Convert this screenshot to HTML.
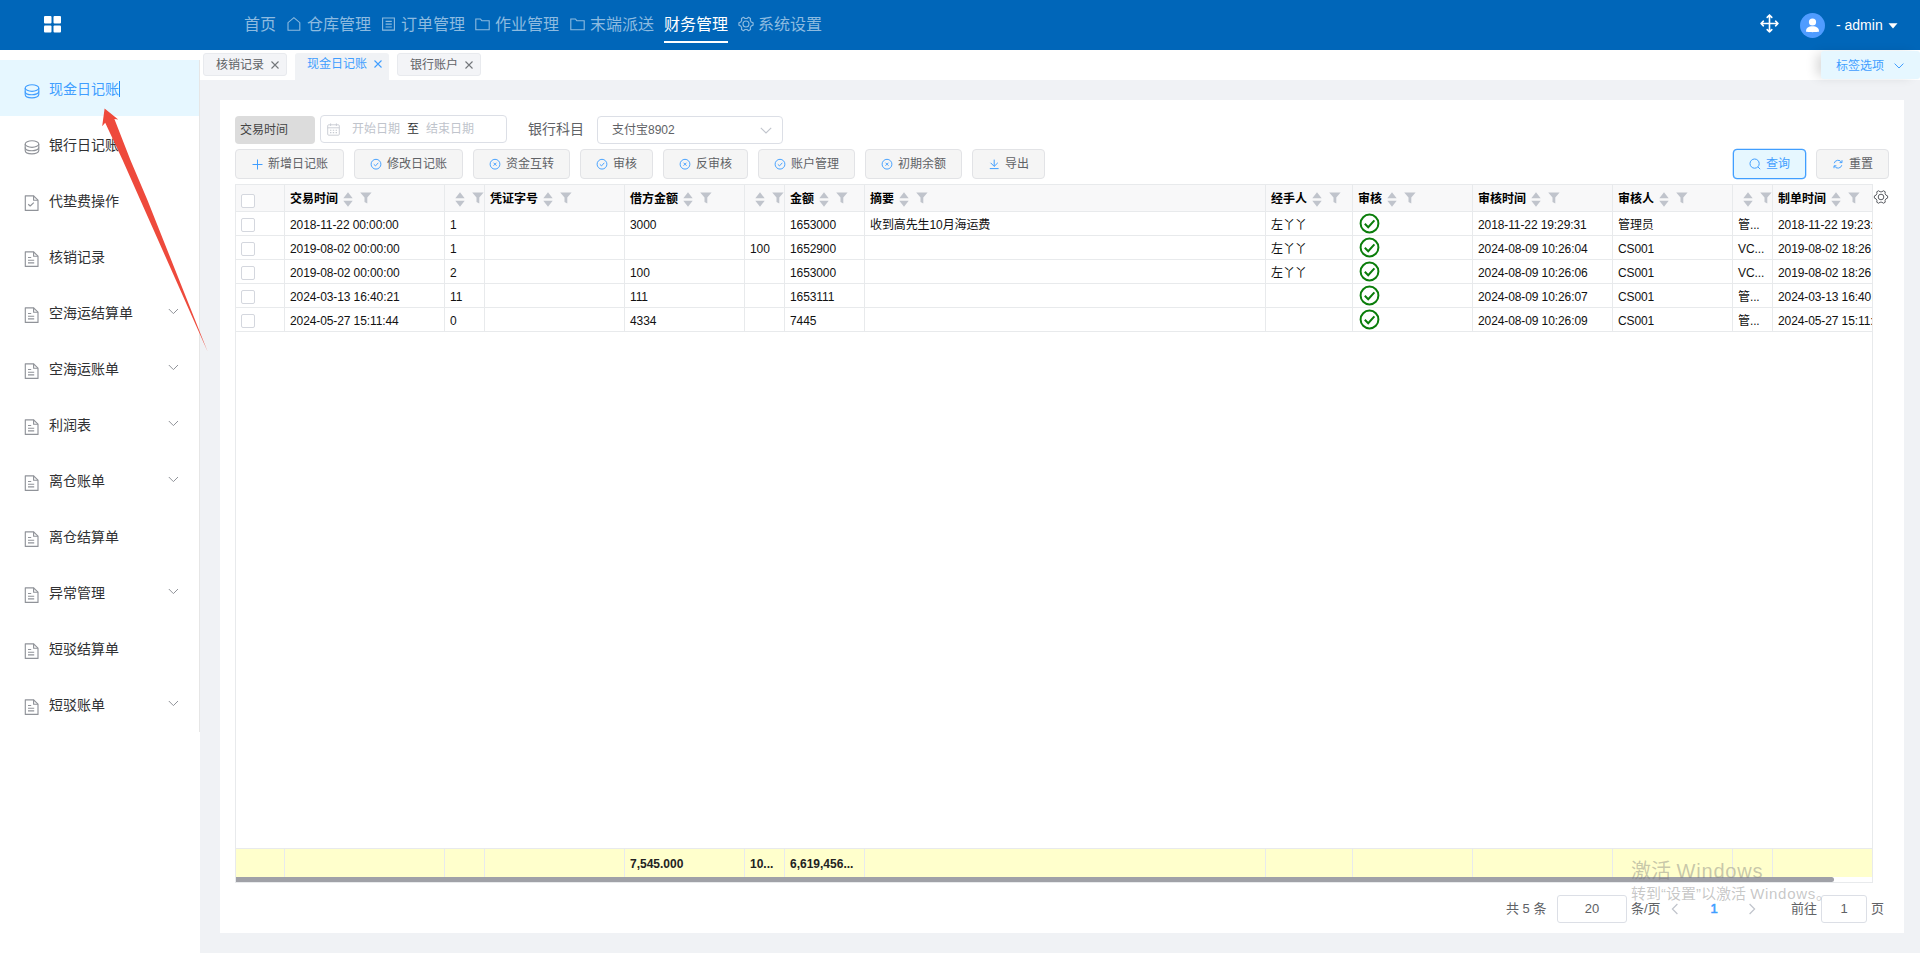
<!DOCTYPE html><html lang="zh-CN"><head><meta charset="utf-8"><title>现金日记账</title><style>
*{box-sizing:border-box;margin:0;padding:0}
html,body{width:1920px;height:953px;overflow:hidden}
body{position:relative;background:#f0f2f5;font-family:"Liberation Sans","Noto Sans CJK SC",sans-serif;font-size:12px;color:#303133}
.abs{position:absolute}
svg{display:block;overflow:visible}
#top{position:absolute;left:0;top:0;width:1920px;height:50px;background:#0066b9}
.nav{position:absolute;top:1px;height:48px;line-height:48px;font-size:16px;color:#8dbbe0;white-space:nowrap}
.nav.on{color:#fff}
.nico{position:absolute}
#side{position:absolute;left:0;top:50px;width:200px;height:903px;background:#fff}
#sideb{position:absolute;left:199px;top:60px;width:1px;height:672px;background:#e6e6e6}
.mi{position:absolute;left:0;width:199px;height:56px;line-height:56px;font-size:14px;color:#303133}
.mi.on{background:#e6f7ff;color:#409eff}
.mi span{position:absolute;left:49px;top:1px;white-space:nowrap}
.mi svg.ic{position:absolute;left:24.4px;top:24px}
.mi svg.ch{position:absolute;left:168px;top:24px}
#tabbar{position:absolute;left:200px;top:50px;width:1720px;height:30px;background:#fff}
.tab{position:absolute;top:53px;height:23px;border:1px solid #e8eaee;border-radius:3px;background:#f3f4f7;font-size:12px;color:#606266;line-height:21px;white-space:nowrap}
.tab.on{height:27px;border:none;border-radius:3px 3px 0 0;background:#f0f2f5;color:#409eff;line-height:21px}
.tab span{position:absolute;top:1px}
.tab svg{position:absolute}
#tagopt{position:absolute;left:1821px;top:51px;width:99px;height:28px;background:#e6f7ff;border-radius:3px;font-size:12px;color:#409eff;line-height:27px;box-shadow:-7px 0 12px -3px rgba(0,0,0,.16)}
#card{position:absolute;left:220px;top:100px;width:1684px;height:833px;background:#fff}
.lbl{position:absolute;left:235px;top:116px;width:80px;height:28px;background:#dcdcdc;border-radius:4px;font-size:12px;color:#444;line-height:29px;padding-left:5px}
.inp{position:absolute;border:1px solid #dcdfe6;border-radius:4px;background:#fff}
.ph{position:absolute;font-size:12px;color:#c0c4cc;line-height:26px;top:0;white-space:nowrap}
.btn{position:absolute;top:149px;height:30px;border:1px solid #e2e3e6;border-radius:4px;background:#f5f5f5;font-size:12px;color:#606266;line-height:28px;white-space:nowrap}
.btn svg{position:absolute;left:15px;top:8px}
.btn span{position:absolute;left:32px;top:0}
.btn.pri{border-color:#409eff;background:#e6f7ff;color:#409eff;box-shadow:0 0 0 .3px #409eff}
#tbl{position:absolute;left:235px;top:184px;width:1638px;height:699px;border:1px solid #e8eaec;background:#fff;overflow:hidden}
.c{position:absolute;border-right:1px solid #e8eaec;border-bottom:1px solid #e8eaec;font-size:12px;color:#111;white-space:nowrap;overflow:hidden;padding-left:5px}
.h{top:0;height:27px;background:#f8f8f9;font-weight:bold;color:#000;line-height:29px}
.r{height:24px;line-height:27px;letter-spacing:-.1px}
.f{top:664px;height:29px;background:#ffffcc;font-weight:bold;line-height:30px;border-bottom:none;color:#222}
.cb{position:absolute;left:5px;width:14px;height:14px;border:1px solid #d4d7de;border-radius:2px;background:#fff}
.srt{display:inline-block;vertical-align:top;margin-left:5px;margin-top:7px}
.flt{display:inline-block;vertical-align:top;margin-left:7px;margin-top:7px}
.pg{position:absolute;font-size:13px;color:#606266;line-height:28px;top:895px;white-space:nowrap}
.wm{position:absolute;color:rgba(120,120,120,.42);white-space:nowrap}
</style></head><body>
<div id="top">
<svg class="abs" style="left:44px;top:15.5px" width="17" height="17" viewBox="0 0 17 17"><g fill="#fff"><rect x="0" y="0" width="7.5" height="7.5" rx="1"/><rect x="9.5" y="0" width="7.5" height="7.5" rx="1"/><rect x="0" y="9.5" width="7.5" height="7" rx="1"/><rect x="9.5" y="9.5" width="7.5" height="7" rx="1"/></g></svg>
<div class="nav" style="left:244px">首页</div>
<svg class="abs" style="left:287px;top:17px" width="14" height="14" viewBox="0 0 14 14"><path d="M1 13.3 V5.7 L6.9 0.7 L12.8 5.7 V13.3 Z" fill="none" stroke="#8dbbe0" stroke-width="1.1" stroke-linejoin="miter"/></svg>
<div class="nav" style="left:307px">仓库管理</div>
<svg class="abs" style="left:382px;top:17px" width="14" height="14" viewBox="0 0 14 14"><path d="M0.6 1 H12.4 V13.1 H0.6 Z M3.6 4.4 H9.8 M3.6 7.1 H9.8 M3.6 10 H9.8" fill="none" stroke="#8dbbe0" stroke-width="1.1"/></svg>
<div class="nav" style="left:401px">订单管理</div>
<svg class="abs" style="left:475px;top:17.5px" width="16" height="14" viewBox="0 0 16 14"><path d="M0.8 1 H5.4 L6.8 2.7 H14.2 V11.8 H0.8 Z" fill="none" stroke="#8dbbe0" stroke-width="1.1" stroke-linejoin="miter"/></svg>
<div class="nav" style="left:495px">作业管理</div>
<svg class="abs" style="left:570px;top:17.5px" width="16" height="14" viewBox="0 0 16 14"><path d="M0.8 1 H5.4 L6.8 2.7 H14.2 V11.8 H0.8 Z" fill="none" stroke="#8dbbe0" stroke-width="1.1" stroke-linejoin="miter"/></svg>
<div class="nav" style="left:590px">末端派送</div>
<div class="nav on" style="left:664px">财务管理</div>
<div class="abs" style="left:664px;top:41px;width:64px;height:2px;background:#fff"></div>
<svg class="abs" style="left:737.7px;top:16px" width="16" height="16" viewBox="0 0 16 16"><path d="M15.11 6.87 L15.11 9.13 L13.26 9.92 L12.29 11.60 L12.53 13.60 L10.58 14.72 L8.97 13.51 L7.03 13.51 L5.42 14.72 L3.47 13.60 L3.71 11.60 L2.74 9.92 L0.89 9.13 L0.89 6.87 L2.74 6.08 L3.71 4.40 L3.47 2.40 L5.42 1.28 L7.03 2.49 L8.97 2.49 L10.58 1.28 L12.53 2.40 L12.29 4.40 L13.26 6.08 Z" fill="none" stroke="#8dbbe0" stroke-width="1.1" stroke-linejoin="round"/><circle cx="8" cy="8" r="3.0" fill="none" stroke="#8dbbe0" stroke-width="1.1"/></svg>
<div class="nav" style="left:758px">系统设置</div>
<svg class="abs" style="left:1760px;top:14px" width="19" height="19" viewBox="0 0 19 19"><path d="M9.5 1 V18 M1 9.5 H18 M7.2 3.4 L9.5 1 L11.8 3.4 M7.2 15.6 L9.5 18 L11.8 15.6 M3.4 7.2 L1 9.5 L3.4 11.8 M15.6 7.2 L18 9.5 L15.6 11.8" fill="none" stroke="#fff" stroke-width="1.6" stroke-linecap="round" stroke-linejoin="round"/></svg>
<svg class="abs" style="left:1800px;top:13px" width="25" height="25" viewBox="0 0 25 25"><circle cx="12.5" cy="12.5" r="12.5" fill="#4f9cff"/><circle cx="12.5" cy="9" r="3.6" fill="#fff"/><path d="M6 18.6 C6 14.6 8.6 13.2 12.5 13.2 S19 14.6 19 18.6 C19 19.4 6 19.4 6 18.6Z" fill="#fff"/></svg>
<div class="abs" style="left:1836px;top:0;height:50px;line-height:50px;font-size:14px;color:#fff;white-space:nowrap">- admin</div>
<svg class="abs" style="left:1888px;top:23px" width="10" height="6" viewBox="0 0 10 6"><path d="M0.5 0.3 H9.5 L5 5.6 Z" fill="#fff"/></svg>
</div>
<div id="side"></div><div id="sideb"></div>
<div class="mi on" style="top:60px"><svg class="ic" width="16" height="15" viewBox="0 0 16 15"><g fill="none" stroke="#409eff" stroke-width="1.15"><ellipse cx="8" cy="4" rx="6.8" ry="3.3"/><path d="M1.2 4 V7.4 C1.2 11.8 14.8 11.8 14.8 7.4 V4"/><path d="M1.2 7.4 V10.6 C1.2 15 14.8 15 14.8 10.6 V7.4"/></g></svg><span>现金日记账</span></div>
<div class="mi" style="top:116px"><svg class="ic" width="16" height="15" viewBox="0 0 16 15"><g fill="none" stroke="#909399" stroke-width="1.15"><ellipse cx="8" cy="4" rx="6.8" ry="3.3"/><path d="M1.2 4 V7.4 C1.2 11.8 14.8 11.8 14.8 7.4 V4"/><path d="M1.2 7.4 V10.6 C1.2 15 14.8 15 14.8 10.6 V7.4"/></g></svg><span>银行日记账</span></div>
<div class="mi" style="top:172px"><svg class="ic" style="margin-top:-1px" width="15" height="16" viewBox="0 0 15 16"><g fill="none" stroke="#909399" stroke-width="1.15" stroke-linejoin="round"><path d="M1.3 0.8 H9.6 L14 5.2 V15.4 H1.3 Z"/><path d="M9.6 0.8 V5.2 H14"/><path d="M4.2 9.2 L6.2 11 L9.8 7.6"/></g></svg><span>代垫费操作</span></div>
<div class="mi" style="top:228px"><svg class="ic" style="margin-top:-1px" width="15" height="16" viewBox="0 0 15 16"><g fill="none" stroke="#909399" stroke-width="1.15" stroke-linejoin="round"><path d="M1.3 0.8 H9.6 L14 5.2 V15.4 H1.3 Z"/><path d="M9.6 0.8 V5.2 H14"/><path d="M4 6.5 H7.2 M4 9.2 H10.2 M4 11.8 H10.2"/></g></svg><span>核销记录</span></div>
<div class="mi" style="top:284px"><svg class="ic" style="margin-top:-1px" width="15" height="16" viewBox="0 0 15 16"><g fill="none" stroke="#909399" stroke-width="1.15" stroke-linejoin="round"><path d="M1.3 0.8 H9.6 L14 5.2 V15.4 H1.3 Z"/><path d="M9.6 0.8 V5.2 H14"/><path d="M4 6.5 H7.2 M4 9.2 H10.2 M4 11.8 H10.2"/></g></svg><span>空海运结算单</span><svg class="ch" width="11" height="7" viewBox="0 0 11 7"><path d="M0.8 1 L5.4 5.6 L10 1" fill="none" stroke="#909399" stroke-width="1"/></svg></div>
<div class="mi" style="top:340px"><svg class="ic" style="margin-top:-1px" width="15" height="16" viewBox="0 0 15 16"><g fill="none" stroke="#909399" stroke-width="1.15" stroke-linejoin="round"><path d="M1.3 0.8 H9.6 L14 5.2 V15.4 H1.3 Z"/><path d="M9.6 0.8 V5.2 H14"/><path d="M4 6.5 H7.2 M4 9.2 H10.2 M4 11.8 H10.2"/></g></svg><span>空海运账单</span><svg class="ch" width="11" height="7" viewBox="0 0 11 7"><path d="M0.8 1 L5.4 5.6 L10 1" fill="none" stroke="#909399" stroke-width="1"/></svg></div>
<div class="mi" style="top:396px"><svg class="ic" style="margin-top:-1px" width="15" height="16" viewBox="0 0 15 16"><g fill="none" stroke="#909399" stroke-width="1.15" stroke-linejoin="round"><path d="M1.3 0.8 H9.6 L14 5.2 V15.4 H1.3 Z"/><path d="M9.6 0.8 V5.2 H14"/><path d="M4 6.5 H7.2 M4 9.2 H10.2 M4 11.8 H10.2"/></g></svg><span>利润表</span><svg class="ch" width="11" height="7" viewBox="0 0 11 7"><path d="M0.8 1 L5.4 5.6 L10 1" fill="none" stroke="#909399" stroke-width="1"/></svg></div>
<div class="mi" style="top:452px"><svg class="ic" style="margin-top:-1px" width="15" height="16" viewBox="0 0 15 16"><g fill="none" stroke="#909399" stroke-width="1.15" stroke-linejoin="round"><path d="M1.3 0.8 H9.6 L14 5.2 V15.4 H1.3 Z"/><path d="M9.6 0.8 V5.2 H14"/><path d="M4 6.5 H7.2 M4 9.2 H10.2 M4 11.8 H10.2"/></g></svg><span>离仓账单</span><svg class="ch" width="11" height="7" viewBox="0 0 11 7"><path d="M0.8 1 L5.4 5.6 L10 1" fill="none" stroke="#909399" stroke-width="1"/></svg></div>
<div class="mi" style="top:508px"><svg class="ic" style="margin-top:-1px" width="15" height="16" viewBox="0 0 15 16"><g fill="none" stroke="#909399" stroke-width="1.15" stroke-linejoin="round"><path d="M1.3 0.8 H9.6 L14 5.2 V15.4 H1.3 Z"/><path d="M9.6 0.8 V5.2 H14"/><path d="M4 6.5 H7.2 M4 9.2 H10.2 M4 11.8 H10.2"/></g></svg><span>离仓结算单</span></div>
<div class="mi" style="top:564px"><svg class="ic" style="margin-top:-1px" width="15" height="16" viewBox="0 0 15 16"><g fill="none" stroke="#909399" stroke-width="1.15" stroke-linejoin="round"><path d="M1.3 0.8 H9.6 L14 5.2 V15.4 H1.3 Z"/><path d="M9.6 0.8 V5.2 H14"/><path d="M4 6.5 H7.2 M4 9.2 H10.2 M4 11.8 H10.2"/></g></svg><span>异常管理</span><svg class="ch" width="11" height="7" viewBox="0 0 11 7"><path d="M0.8 1 L5.4 5.6 L10 1" fill="none" stroke="#909399" stroke-width="1"/></svg></div>
<div class="mi" style="top:620px"><svg class="ic" style="margin-top:-1px" width="15" height="16" viewBox="0 0 15 16"><g fill="none" stroke="#909399" stroke-width="1.15" stroke-linejoin="round"><path d="M1.3 0.8 H9.6 L14 5.2 V15.4 H1.3 Z"/><path d="M9.6 0.8 V5.2 H14"/><path d="M4 6.5 H7.2 M4 9.2 H10.2 M4 11.8 H10.2"/></g></svg><span>短驳结算单</span></div>
<div class="mi" style="top:676px"><svg class="ic" style="margin-top:-1px" width="15" height="16" viewBox="0 0 15 16"><g fill="none" stroke="#909399" stroke-width="1.15" stroke-linejoin="round"><path d="M1.3 0.8 H9.6 L14 5.2 V15.4 H1.3 Z"/><path d="M9.6 0.8 V5.2 H14"/><path d="M4 6.5 H7.2 M4 9.2 H10.2 M4 11.8 H10.2"/></g></svg><span>短驳账单</span><svg class="ch" width="11" height="7" viewBox="0 0 11 7"><path d="M0.8 1 L5.4 5.6 L10 1" fill="none" stroke="#909399" stroke-width="1"/></svg></div>
<div class="abs" style="left:119px;top:81px;width:1px;height:16px;background:#1f8fff"></div>
<div id="tabbar"></div>
<div class="tab" style="left:203px;width:84px"><span style="left:12px">核销记录</span><svg style="left:67px;top:6.5px" width="8" height="8" viewBox="0 0 8 8"><path d="M0.5 0.5 L7.5 7.5 M7.5 0.5 L0.5 7.5" stroke="#73767a" stroke-width="1.1" fill="none"/></svg></div>
<div class="tab on" style="left:295px;width:94px"><span style="left:12px">现金日记账</span><svg style="left:79px;top:6.5px" width="8" height="8" viewBox="0 0 8 8"><path d="M0.5 0.5 L7.5 7.5 M7.5 0.5 L0.5 7.5" stroke="#409eff" stroke-width="1.1" fill="none"/></svg></div>
<div class="tab" style="left:397px;width:84px"><span style="left:12px">银行账户</span><svg style="left:67px;top:6.5px" width="8" height="8" viewBox="0 0 8 8"><path d="M0.5 0.5 L7.5 7.5 M7.5 0.5 L0.5 7.5" stroke="#73767a" stroke-width="1.1" fill="none"/></svg></div>
<div id="tagopt"><span class="abs" style="left:15px;top:1.5px">标签选项</span><svg class="abs" style="left:73px;top:11.5px" width="10" height="6" viewBox="0 0 10 6"><path d="M0.6 0.6 L5 5 L9.4 0.6" fill="none" stroke="#409eff" stroke-width="1"/></svg></div>
<div id="card"></div>
<div class="lbl">交易时间</div>
<div class="inp" style="left:320px;top:115px;width:187px;height:28px"><svg class="abs" style="left:6px;top:6.5px" width="13" height="13" viewBox="0 0 13 13"><g fill="none" stroke="#c6cad1" stroke-width="0.9"><rect x="0.7" y="1.8" width="11.6" height="10.4" rx="1"/><path d="M0.7 4.8 H12.3 M3.6 0.4 V3 M9.4 0.4 V3"/><path d="M3 7.2 H4.4 M5.8 7.2 H7.2 M8.6 7.2 H10 M3 9.6 H4.4 M5.8 9.6 H7.2 M8.6 9.6 H10" stroke-width="1.1"/></g></svg><span class="ph" style="left:31px">开始日期</span><span class="ph" style="left:86px;color:#303133">至</span><span class="ph" style="left:105px">结束日期</span></div>
<div class="abs" style="left:528px;top:115px;font-size:14px;color:#606266;line-height:28px;white-space:nowrap">银行科目</div>
<div class="inp" style="left:597px;top:116px;width:186px;height:28px"><span class="ph" style="left:14px;color:#606266">支付宝8902</span><svg class="abs" style="left:162px;top:10px" width="12" height="7" viewBox="0 0 12 7"><path d="M0.8 0.8 L6 6 L11.2 0.8" fill="none" stroke="#c0c4cc" stroke-width="1.1"/></svg></div>
<div class="btn" style="left:235px;width:109px"><svg width="12" height="12" viewBox="0 0 12 12"><path d="M6.5 1.5 V11.5 M1.5 6.5 H11.5" stroke="#409eff" stroke-width="1" fill="none"/></svg><span>新增日记账</span></div>
<div class="btn" style="left:354px;width:109px"><svg width="12" height="12" viewBox="0 0 12 12"><circle cx="6" cy="6.2" r="4.9" fill="none" stroke="#409eff" stroke-width="0.95"/><path d="M3.8 6.3 L5.5 7.9 L8.3 4.8" fill="none" stroke="#409eff" stroke-width="0.95"/></svg><span>修改日记账</span></div>
<div class="btn" style="left:473px;width:97px"><svg width="12" height="12" viewBox="0 0 12 12"><circle cx="6" cy="6.2" r="4.9" fill="none" stroke="#409eff" stroke-width="0.95"/><path d="M4.5 4.7 L7.5 7.7 M7.5 4.7 L4.5 7.7" fill="none" stroke="#409eff" stroke-width="0.95"/></svg><span>资金互转</span></div>
<div class="btn" style="left:580px;width:73px"><svg width="12" height="12" viewBox="0 0 12 12"><circle cx="6" cy="6.2" r="4.9" fill="none" stroke="#409eff" stroke-width="0.95"/><path d="M3.8 6.3 L5.5 7.9 L8.3 4.8" fill="none" stroke="#409eff" stroke-width="0.95"/></svg><span>审核</span></div>
<div class="btn" style="left:663px;width:85px"><svg width="12" height="12" viewBox="0 0 12 12"><circle cx="6" cy="6.2" r="4.9" fill="none" stroke="#409eff" stroke-width="0.95"/><path d="M4.5 4.7 L7.5 7.7 M7.5 4.7 L4.5 7.7" fill="none" stroke="#409eff" stroke-width="0.95"/></svg><span>反审核</span></div>
<div class="btn" style="left:758px;width:97px"><svg width="12" height="12" viewBox="0 0 12 12"><circle cx="6" cy="6.2" r="4.9" fill="none" stroke="#409eff" stroke-width="0.95"/><path d="M3.8 6.3 L5.5 7.9 L8.3 4.8" fill="none" stroke="#409eff" stroke-width="0.95"/></svg><span>账户管理</span></div>
<div class="btn" style="left:865px;width:97px"><svg width="12" height="12" viewBox="0 0 12 12"><circle cx="6" cy="6.2" r="4.9" fill="none" stroke="#409eff" stroke-width="0.95"/><path d="M4.5 4.7 L7.5 7.7 M7.5 4.7 L4.5 7.7" fill="none" stroke="#409eff" stroke-width="0.95"/></svg><span>初期余额</span></div>
<div class="btn" style="left:972px;width:73px"><svg width="12" height="12" viewBox="0 0 12 12"><path d="M6.2 1.6 V8.2 M2.6 4.8 L6.2 8.4 L9.8 4.8 M1.8 10.6 H10.6" fill="none" stroke="#409eff" stroke-width="1"/></svg><span>导出</span></div>
<div class="btn pri" style="left:1733px;width:73px"><svg width="12" height="12" viewBox="0 0 12 12"><circle cx="5.6" cy="5.6" r="4.6" fill="none" stroke="#409eff" stroke-width="1"/><path d="M9 9 L11.2 11.2" stroke="#409eff" stroke-width="1"/></svg><span>查询</span></div>
<div class="btn" style="left:1816px;width:73px"><svg width="12" height="12" viewBox="0 0 12 12"><g fill="none" stroke="#409eff" stroke-width="0.95"><path d="M2.2 5.2 A4 4 0 0 1 9.6 4.4 M9.8 7.2 A4 4 0 0 1 2.4 8"/><path d="M10 2.2 V4.6 H7.6 M2 10.2 V7.8 H4.4"/></g></svg><span>重置</span></div>
<div id="tbl">
<div class="c h" style="left:0px;width:49px"><i class="cb" style="top:9px"></i></div>
<div class="c h" style="left:49px;width:160px">交易时间<svg class="srt" width="10" height="15" viewBox="0 0 10 15"><path d="M5 0.3 L9.7 6.3 H0.3 Z M5 14.7 L9.7 8.7 H0.3 Z" fill="#c0c4cc"/></svg><svg class="flt" width="12" height="12" viewBox="0 0 12 12"><path d="M0.2 0.4 H11.6 L7.3 5.4 V11.6 L4.5 10 V5.4 Z" fill="#c0c4cc"/></svg></div>
<div class="c h" style="left:209px;width:40px"><svg class="srt" width="10" height="15" viewBox="0 0 10 15"><path d="M5 0.3 L9.7 6.3 H0.3 Z M5 14.7 L9.7 8.7 H0.3 Z" fill="#c0c4cc"/></svg><svg class="flt" width="12" height="12" viewBox="0 0 12 12"><path d="M0.2 0.4 H11.6 L7.3 5.4 V11.6 L4.5 10 V5.4 Z" fill="#c0c4cc"/></svg></div>
<div class="c h" style="left:249px;width:140px">凭证字号<svg class="srt" width="10" height="15" viewBox="0 0 10 15"><path d="M5 0.3 L9.7 6.3 H0.3 Z M5 14.7 L9.7 8.7 H0.3 Z" fill="#c0c4cc"/></svg><svg class="flt" width="12" height="12" viewBox="0 0 12 12"><path d="M0.2 0.4 H11.6 L7.3 5.4 V11.6 L4.5 10 V5.4 Z" fill="#c0c4cc"/></svg></div>
<div class="c h" style="left:389px;width:120px">借方金额<svg class="srt" width="10" height="15" viewBox="0 0 10 15"><path d="M5 0.3 L9.7 6.3 H0.3 Z M5 14.7 L9.7 8.7 H0.3 Z" fill="#c0c4cc"/></svg><svg class="flt" width="12" height="12" viewBox="0 0 12 12"><path d="M0.2 0.4 H11.6 L7.3 5.4 V11.6 L4.5 10 V5.4 Z" fill="#c0c4cc"/></svg></div>
<div class="c h" style="left:509px;width:40px"><svg class="srt" width="10" height="15" viewBox="0 0 10 15"><path d="M5 0.3 L9.7 6.3 H0.3 Z M5 14.7 L9.7 8.7 H0.3 Z" fill="#c0c4cc"/></svg><svg class="flt" width="12" height="12" viewBox="0 0 12 12"><path d="M0.2 0.4 H11.6 L7.3 5.4 V11.6 L4.5 10 V5.4 Z" fill="#c0c4cc"/></svg></div>
<div class="c h" style="left:549px;width:80px">金额<svg class="srt" width="10" height="15" viewBox="0 0 10 15"><path d="M5 0.3 L9.7 6.3 H0.3 Z M5 14.7 L9.7 8.7 H0.3 Z" fill="#c0c4cc"/></svg><svg class="flt" width="12" height="12" viewBox="0 0 12 12"><path d="M0.2 0.4 H11.6 L7.3 5.4 V11.6 L4.5 10 V5.4 Z" fill="#c0c4cc"/></svg></div>
<div class="c h" style="left:629px;width:401px">摘要<svg class="srt" width="10" height="15" viewBox="0 0 10 15"><path d="M5 0.3 L9.7 6.3 H0.3 Z M5 14.7 L9.7 8.7 H0.3 Z" fill="#c0c4cc"/></svg><svg class="flt" width="12" height="12" viewBox="0 0 12 12"><path d="M0.2 0.4 H11.6 L7.3 5.4 V11.6 L4.5 10 V5.4 Z" fill="#c0c4cc"/></svg></div>
<div class="c h" style="left:1030px;width:87px">经手人<svg class="srt" width="10" height="15" viewBox="0 0 10 15"><path d="M5 0.3 L9.7 6.3 H0.3 Z M5 14.7 L9.7 8.7 H0.3 Z" fill="#c0c4cc"/></svg><svg class="flt" width="12" height="12" viewBox="0 0 12 12"><path d="M0.2 0.4 H11.6 L7.3 5.4 V11.6 L4.5 10 V5.4 Z" fill="#c0c4cc"/></svg></div>
<div class="c h" style="left:1117px;width:120px">审核<svg class="srt" width="10" height="15" viewBox="0 0 10 15"><path d="M5 0.3 L9.7 6.3 H0.3 Z M5 14.7 L9.7 8.7 H0.3 Z" fill="#c0c4cc"/></svg><svg class="flt" width="12" height="12" viewBox="0 0 12 12"><path d="M0.2 0.4 H11.6 L7.3 5.4 V11.6 L4.5 10 V5.4 Z" fill="#c0c4cc"/></svg></div>
<div class="c h" style="left:1237px;width:140px">审核时间<svg class="srt" width="10" height="15" viewBox="0 0 10 15"><path d="M5 0.3 L9.7 6.3 H0.3 Z M5 14.7 L9.7 8.7 H0.3 Z" fill="#c0c4cc"/></svg><svg class="flt" width="12" height="12" viewBox="0 0 12 12"><path d="M0.2 0.4 H11.6 L7.3 5.4 V11.6 L4.5 10 V5.4 Z" fill="#c0c4cc"/></svg></div>
<div class="c h" style="left:1377px;width:120px">审核人<svg class="srt" width="10" height="15" viewBox="0 0 10 15"><path d="M5 0.3 L9.7 6.3 H0.3 Z M5 14.7 L9.7 8.7 H0.3 Z" fill="#c0c4cc"/></svg><svg class="flt" width="12" height="12" viewBox="0 0 12 12"><path d="M0.2 0.4 H11.6 L7.3 5.4 V11.6 L4.5 10 V5.4 Z" fill="#c0c4cc"/></svg></div>
<div class="c h" style="left:1497px;width:40px"><svg class="srt" width="10" height="15" viewBox="0 0 10 15"><path d="M5 0.3 L9.7 6.3 H0.3 Z M5 14.7 L9.7 8.7 H0.3 Z" fill="#c0c4cc"/></svg><svg class="flt" width="12" height="12" viewBox="0 0 12 12"><path d="M0.2 0.4 H11.6 L7.3 5.4 V11.6 L4.5 10 V5.4 Z" fill="#c0c4cc"/></svg></div>
<div class="c h" style="left:1537px;width:101px">制单时间<svg class="srt" width="10" height="15" viewBox="0 0 10 15"><path d="M5 0.3 L9.7 6.3 H0.3 Z M5 14.7 L9.7 8.7 H0.3 Z" fill="#c0c4cc"/></svg><svg class="flt" width="12" height="12" viewBox="0 0 12 12"><path d="M0.2 0.4 H11.6 L7.3 5.4 V11.6 L4.5 10 V5.4 Z" fill="#c0c4cc"/></svg></div>
<div class="c r" style="left:0;top:27px;width:49px"><i class="cb" style="top:6px"></i></div>
<div class="c r" style="left:49px;top:27px;width:160px">2018-11-22 00:00:00</div>
<div class="c r" style="left:209px;top:27px;width:40px">1</div>
<div class="c r" style="left:249px;top:27px;width:140px"></div>
<div class="c r" style="left:389px;top:27px;width:120px">3000</div>
<div class="c r" style="left:509px;top:27px;width:40px"></div>
<div class="c r" style="left:549px;top:27px;width:80px">1653000</div>
<div class="c r" style="left:629px;top:27px;width:401px">收到高先生10月海运费</div>
<div class="c r" style="left:1030px;top:27px;width:87px">左丫丫</div>
<div class="c r" style="left:1117px;top:27px;width:120px"><svg class="abs" style="left:6px;top:1px" width="21" height="21" viewBox="0 0 21 21"><circle cx="10.5" cy="10.5" r="8.9" fill="none" stroke="#0a7d0a" stroke-width="2"/><path d="M5.8 10.8 L9.2 14.2 L15.4 7.4" fill="none" stroke="#0a7d0a" stroke-width="2"/></svg></div>
<div class="c r" style="left:1237px;top:27px;width:140px">2018-11-22 19:29:31</div>
<div class="c r" style="left:1377px;top:27px;width:120px">管理员</div>
<div class="c r" style="left:1497px;top:27px;width:40px">管...</div>
<div class="c r" style="left:1537px;top:27px;width:101px">2018-11-22 19:23:</div>
<div class="c r" style="left:0;top:51px;width:49px"><i class="cb" style="top:6px"></i></div>
<div class="c r" style="left:49px;top:51px;width:160px">2019-08-02 00:00:00</div>
<div class="c r" style="left:209px;top:51px;width:40px">1</div>
<div class="c r" style="left:249px;top:51px;width:140px"></div>
<div class="c r" style="left:389px;top:51px;width:120px"></div>
<div class="c r" style="left:509px;top:51px;width:40px">100</div>
<div class="c r" style="left:549px;top:51px;width:80px">1652900</div>
<div class="c r" style="left:629px;top:51px;width:401px"></div>
<div class="c r" style="left:1030px;top:51px;width:87px">左丫丫</div>
<div class="c r" style="left:1117px;top:51px;width:120px"><svg class="abs" style="left:6px;top:1px" width="21" height="21" viewBox="0 0 21 21"><circle cx="10.5" cy="10.5" r="8.9" fill="none" stroke="#0a7d0a" stroke-width="2"/><path d="M5.8 10.8 L9.2 14.2 L15.4 7.4" fill="none" stroke="#0a7d0a" stroke-width="2"/></svg></div>
<div class="c r" style="left:1237px;top:51px;width:140px">2024-08-09 10:26:04</div>
<div class="c r" style="left:1377px;top:51px;width:120px">CS001</div>
<div class="c r" style="left:1497px;top:51px;width:40px">VC...</div>
<div class="c r" style="left:1537px;top:51px;width:101px">2019-08-02 18:26:</div>
<div class="c r" style="left:0;top:75px;width:49px"><i class="cb" style="top:6px"></i></div>
<div class="c r" style="left:49px;top:75px;width:160px">2019-08-02 00:00:00</div>
<div class="c r" style="left:209px;top:75px;width:40px">2</div>
<div class="c r" style="left:249px;top:75px;width:140px"></div>
<div class="c r" style="left:389px;top:75px;width:120px">100</div>
<div class="c r" style="left:509px;top:75px;width:40px"></div>
<div class="c r" style="left:549px;top:75px;width:80px">1653000</div>
<div class="c r" style="left:629px;top:75px;width:401px"></div>
<div class="c r" style="left:1030px;top:75px;width:87px">左丫丫</div>
<div class="c r" style="left:1117px;top:75px;width:120px"><svg class="abs" style="left:6px;top:1px" width="21" height="21" viewBox="0 0 21 21"><circle cx="10.5" cy="10.5" r="8.9" fill="none" stroke="#0a7d0a" stroke-width="2"/><path d="M5.8 10.8 L9.2 14.2 L15.4 7.4" fill="none" stroke="#0a7d0a" stroke-width="2"/></svg></div>
<div class="c r" style="left:1237px;top:75px;width:140px">2024-08-09 10:26:06</div>
<div class="c r" style="left:1377px;top:75px;width:120px">CS001</div>
<div class="c r" style="left:1497px;top:75px;width:40px">VC...</div>
<div class="c r" style="left:1537px;top:75px;width:101px">2019-08-02 18:26:</div>
<div class="c r" style="left:0;top:99px;width:49px"><i class="cb" style="top:6px"></i></div>
<div class="c r" style="left:49px;top:99px;width:160px">2024-03-13 16:40:21</div>
<div class="c r" style="left:209px;top:99px;width:40px">11</div>
<div class="c r" style="left:249px;top:99px;width:140px"></div>
<div class="c r" style="left:389px;top:99px;width:120px">111</div>
<div class="c r" style="left:509px;top:99px;width:40px"></div>
<div class="c r" style="left:549px;top:99px;width:80px">1653111</div>
<div class="c r" style="left:629px;top:99px;width:401px"></div>
<div class="c r" style="left:1030px;top:99px;width:87px"></div>
<div class="c r" style="left:1117px;top:99px;width:120px"><svg class="abs" style="left:6px;top:1px" width="21" height="21" viewBox="0 0 21 21"><circle cx="10.5" cy="10.5" r="8.9" fill="none" stroke="#0a7d0a" stroke-width="2"/><path d="M5.8 10.8 L9.2 14.2 L15.4 7.4" fill="none" stroke="#0a7d0a" stroke-width="2"/></svg></div>
<div class="c r" style="left:1237px;top:99px;width:140px">2024-08-09 10:26:07</div>
<div class="c r" style="left:1377px;top:99px;width:120px">CS001</div>
<div class="c r" style="left:1497px;top:99px;width:40px">管...</div>
<div class="c r" style="left:1537px;top:99px;width:101px">2024-03-13 16:40:</div>
<div class="c r" style="left:0;top:123px;width:49px"><i class="cb" style="top:6px"></i></div>
<div class="c r" style="left:49px;top:123px;width:160px">2024-05-27 15:11:44</div>
<div class="c r" style="left:209px;top:123px;width:40px">0</div>
<div class="c r" style="left:249px;top:123px;width:140px"></div>
<div class="c r" style="left:389px;top:123px;width:120px">4334</div>
<div class="c r" style="left:509px;top:123px;width:40px"></div>
<div class="c r" style="left:549px;top:123px;width:80px">7445</div>
<div class="c r" style="left:629px;top:123px;width:401px"></div>
<div class="c r" style="left:1030px;top:123px;width:87px"></div>
<div class="c r" style="left:1117px;top:123px;width:120px"><svg class="abs" style="left:6px;top:1px" width="21" height="21" viewBox="0 0 21 21"><circle cx="10.5" cy="10.5" r="8.9" fill="none" stroke="#0a7d0a" stroke-width="2"/><path d="M5.8 10.8 L9.2 14.2 L15.4 7.4" fill="none" stroke="#0a7d0a" stroke-width="2"/></svg></div>
<div class="c r" style="left:1237px;top:123px;width:140px">2024-08-09 10:26:09</div>
<div class="c r" style="left:1377px;top:123px;width:120px">CS001</div>
<div class="c r" style="left:1497px;top:123px;width:40px">管...</div>
<div class="c r" style="left:1537px;top:123px;width:101px">2024-05-27 15:11:</div>
<div class="abs" style="left:0;top:663px;width:1640px;height:1px;background:#e8eaec"></div>
<div class="c f" style="left:0;width:49px"></div>
<div class="c f" style="left:49px;width:160px"></div>
<div class="c f" style="left:209px;width:40px"></div>
<div class="c f" style="left:249px;width:140px"></div>
<div class="c f" style="left:389px;width:120px">7,545.000</div>
<div class="c f" style="left:509px;width:40px">10...</div>
<div class="c f" style="left:549px;width:80px">6,619,456...</div>
<div class="c f" style="left:629px;width:401px"></div>
<div class="c f" style="left:1030px;width:87px"></div>
<div class="c f" style="left:1117px;width:120px"></div>
<div class="c f" style="left:1237px;width:140px"></div>
<div class="c f" style="left:1377px;width:120px"></div>
<div class="c f" style="left:1497px;width:40px"></div>
<div class="c f" style="left:1537px;width:101px"></div>
<div class="abs" style="left:0;top:692px;width:1640px;height:6px;background:#fff"></div>
<div class="abs" style="left:0;top:692px;width:1598px;height:5px;background:#a0a1a7;border-radius:0 3px 3px 0"></div>
</div>
<svg class="abs" style="left:1873px;top:189px" width="16" height="16" viewBox="0 0 16 16"><path d="M14.62 6.95 L14.62 9.05 L12.98 9.81 L12.06 11.41 L12.22 13.21 L10.40 14.25 L8.92 13.22 L7.08 13.22 L5.60 14.25 L3.78 13.21 L3.94 11.41 L3.02 9.81 L1.38 9.05 L1.38 6.95 L3.02 6.19 L3.94 4.59 L3.78 2.79 L5.60 1.75 L7.08 2.78 L8.92 2.78 L10.40 1.75 L12.22 2.79 L12.06 4.59 L12.98 6.19 Z" fill="none" stroke="#5a5d63" stroke-width="1.0" stroke-linejoin="round"/><circle cx="8" cy="8" r="2.8" fill="none" stroke="#5a5d63" stroke-width="1.0"/></svg>
<div class="pg" style="left:1506px">共 5 条</div>
<div class="inp" style="left:1557px;top:895px;width:70px;height:28px;border-radius:3px"></div><div class="pg" style="left:1557px;width:70px;text-align:center">20</div>
<div class="pg" style="left:1631px">条/页</div>
<svg class="abs" style="left:1671px;top:903px" width="8" height="12" viewBox="0 0 8 12"><path d="M6.4 1 L1.4 6 L6.4 11" fill="none" stroke="#c0c4cc" stroke-width="1.2"/></svg>
<div class="pg" style="left:1704px;width:20px;text-align:center;color:#409eff;-webkit-text-stroke:.6px #409eff">1</div>
<svg class="abs" style="left:1748px;top:903px" width="8" height="12" viewBox="0 0 8 12"><path d="M1.6 1 L6.6 6 L1.6 11" fill="none" stroke="#c0c4cc" stroke-width="1.2"/></svg>
<div class="pg" style="left:1791px">前往</div>
<div class="inp" style="left:1821px;top:895px;width:46px;height:28px;border-radius:3px"></div><div class="pg" style="left:1821px;width:46px;text-align:center">1</div>
<div class="pg" style="left:1871px">页</div>
<div class="wm" style="left:1631px;top:857px;font-size:20px;line-height:28px">激活 <span style="letter-spacing:.8px">Windows</span></div>
<div class="wm" style="left:1631px;top:884px;font-size:15px;line-height:20px">转到“设置”以激活 <span style="letter-spacing:.7px">Windows</span>。</div>
<svg class="abs" style="left:0;top:0" width="260" height="400" viewBox="0 0 260 400"><path d="M104.6 108.5 L118.2 119.5 L114.4 118.9 L130.4 160 L147.4 200 L207.7 351.8 L140.3 200 L122.6 160 L105.2 122.8 L102.2 126.2 Z" fill="#ee4a3c"/></svg>
</body></html>
